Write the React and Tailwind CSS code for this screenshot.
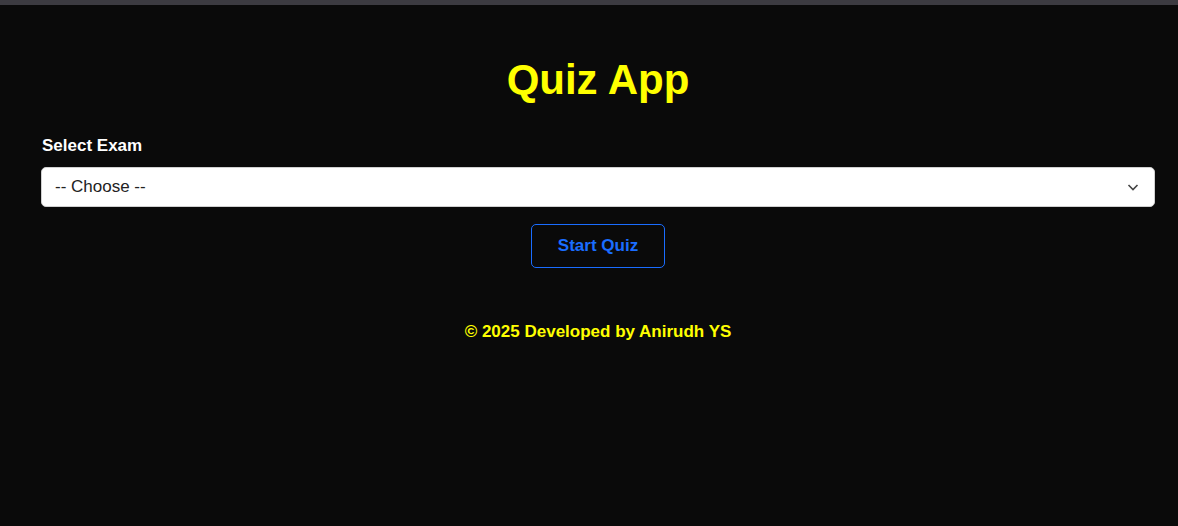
export default function App() {
  return (
    <div className="min-h-[526px] bg-[#0a0a0a] font-['Liberation_Sans',Arial,sans-serif]">
      <div className="h-[5px] bg-[#3c3b41]" />
      <div className="pl-[41px] pr-[23px] pt-[51px]">
        <h1 className="h-[48px] text-center text-[42px] font-bold leading-[48px] text-[#ffff00]">Quiz App</h1>

        <label className="mt-[32px] block pl-[1px] text-[17px] font-bold leading-[20px] text-white">Select Exam</label>

        <div className="relative mt-[11px] flex h-[40px] items-center rounded-[5px] border border-[#d0d0d0] bg-white pl-[13px]">
          <span className="text-[17px] leading-[20px] text-[#222]">-- Choose --</span>
          <svg className="absolute right-[15px] top-[15px]" width="12" height="9" viewBox="0 0 12 9" fill="none">
            <path d="M1.5 2 L6 6.5 L10.5 2" stroke="#444" strokeWidth="1.6" />
          </svg>
        </div>

        <div className="mt-[17px] flex justify-center">
          <button className="h-[44px] w-[134px] rounded-[5px] border border-[#1a6dff] bg-transparent text-[17px] font-bold text-[#1a6dff]">
            Start Quiz
          </button>
        </div>

        <p className="mt-[54px] text-center text-[17px] font-bold leading-[20px] text-[#ffff00]">
          © 2025 Developed by Anirudh YS
        </p>
      </div>
    </div>
  );
}
